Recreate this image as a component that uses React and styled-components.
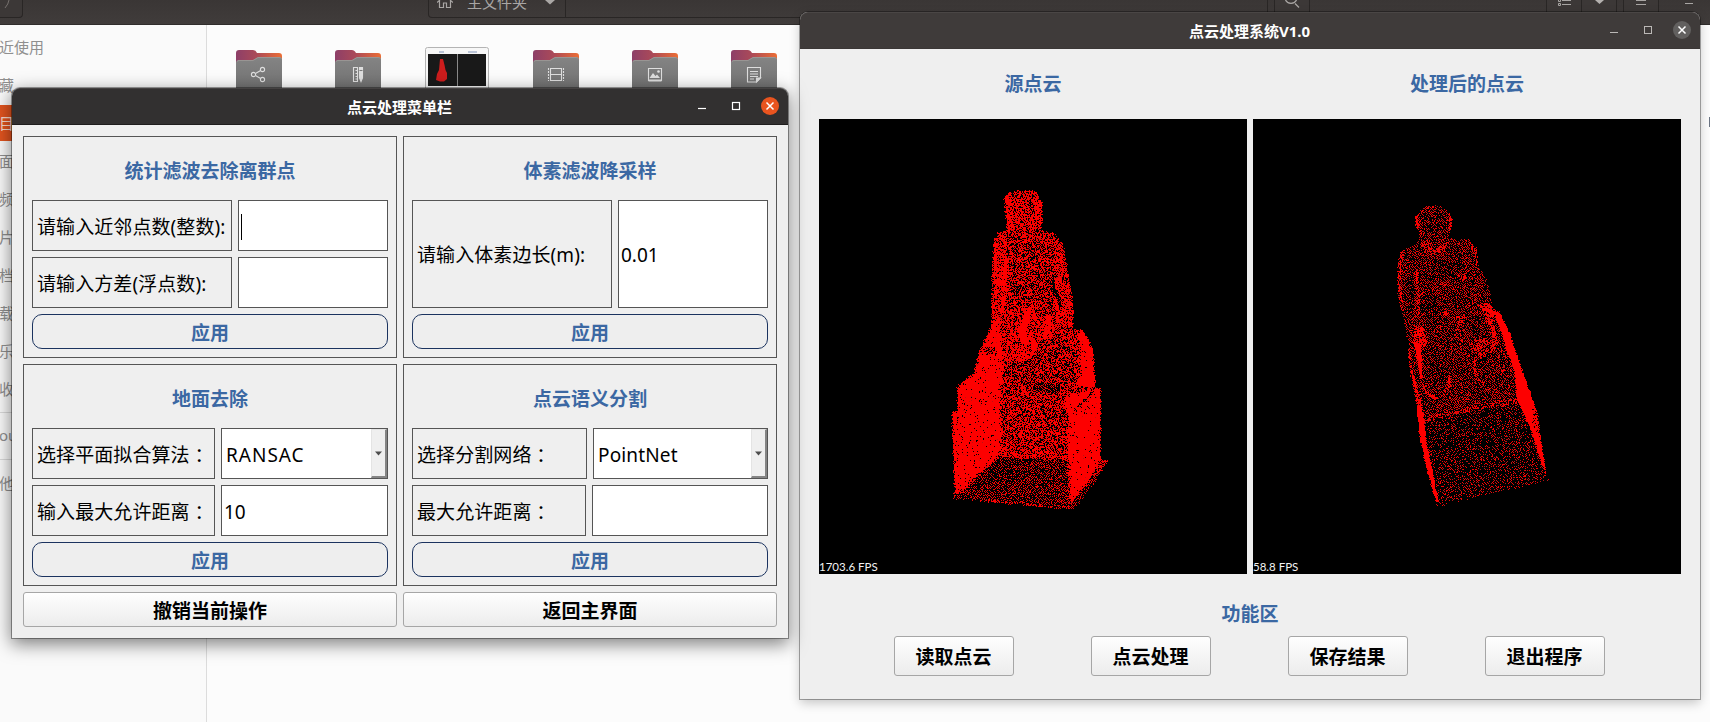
import React from "react";
import styled, { createGlobalStyle } from "styled-components";

const Global = createGlobalStyle`
  html, body { margin: 0; padding: 0; overflow: hidden; }
  *, *::before, *::after { box-sizing: border-box; }
  body, button, input { font-family: "Noto Sans", "Noto Sans CJK SC", sans-serif; }
`;

const Desktop = styled.div`
  position: relative;
  width: 1710px;
  height: 722px;
  overflow: hidden;
  background: #fcfcfc;
`;

/* ---------- file manager in the background ---------- */

const FileManager = styled.div`
  display: flex;
  flex-direction: column;
  height: 100%;
`;

const HeaderBar = styled.header`
  display: flex;
  flex: none;
  align-items: flex-start;
  height: 25px;
  background: linear-gradient(#3a3635, #403c3b);
  border-bottom: 1px solid #302d2c;
  color: #a9a6a4;
`;

const HeaderButton = styled.div`
  display: flex;
  justify-content: center;
  flex: none;
  width: ${(p) => p.$w}px;
  height: 18px;
  margin-left: ${(p) => p.$ml || 0}px;
  border: solid #292625;
  border-width: 0 1px 1px ${(p) => (p.$joined ? 0 : 1)}px;
  border-radius: ${(p) => (p.$joined ? "0 0 4px 0" : "0 0 4px 4px")};
  background: #3c3837;
  svg { display: block; }
`;

const PathBar = styled.div`
  display: flex;
  flex: none;
  width: 840px;
  height: 18px;
  margin-left: 405px;
  border: solid #292625;
  border-width: 0 1px 1px;
  border-radius: 0 0 4px 4px;
`;

const PathItem = styled.div`
  display: flex;
  width: 137px;
  height: 17px;
  padding-left: 8px;
  border-right: 1px solid #292625;
  font-size: 15px;
  line-height: 20px;
  overflow: hidden;
  svg { flex: none; display: block; }
`;

const PathName = styled.span`
  margin: -8px 0 0 14px;
  width: 78px;
`;

const FileBody = styled.div`
  display: flex;
  flex: 1;
`;

const Sidebar = styled.nav`
  width: 207px;
  padding-top: 4px;
  background: #fafafa;
  border-right: 1px solid #dcdcdc;
`;

const Place = styled.div`
  height: 38px;
  margin-left: -1px;
  display: flex;
  align-items: center;
  font-size: 15px;
  line-height: 20px;
  color: ${(p) => (p.$on ? "#f8dccf" : "#8f8f8f")};
  padding-bottom: 2px;
  background: ${(p) => (p.$on ? "linear-gradient(#e2541f, #e2541f) 0 0 / 100% 36px no-repeat" : "none")};
`;

const PlaceRule = styled.div`
  height: 1px;
  margin: ${(p) => p.$m};
  background: #dadada;
`;

const FileGrid = styled.div`
  display: flex;
  gap: 35px;
  padding: 22px 0 0 20px;
`;

const FileItem = styled.div`
  width: 64px;
  height: 56px;
  display: flex;
  justify-content: center;
  svg { display: block; flex: none; }
`;

const EdgeMark = styled.div`
  position: absolute;
  right: 0;
  top: 117px;
  width: 1px;
  height: 10px;
  background: #6c7584;
`;

/* ---------- application windows ---------- */

const Window = styled.section`
  position: absolute;
  left: ${(p) => p.$x}px;
  top: ${(p) => p.$y}px;
  width: ${(p) => p.$w}px;
  height: ${(p) => p.$h}px;
  display: flex;
  flex-direction: column;
  border-radius: 8px 8px 0 0;
  background: #efefef;
  box-shadow: ${(p) =>
    p.$active
      ? "0 0 0 1px rgba(0,0,0,.36), 0 5px 18px 1px rgba(0,0,0,.5)"
      : "0 0 0 1px rgba(0,0,0,.32), 0 4px 11px rgba(0,0,0,.22)"};
`;

const TitleBar = styled.header`
  display: grid;
  grid-template-columns: 1fr auto 1fr;
  flex: none;
  align-items: center;
  height: 37px;
  padding-right: 9px;
  padding-left: 9px;
  border-radius: 8px 8px 0 0;
  color: #fff;
  background: ${(p) => (p.$active ? "#323030" : "#3f3b3a")};
  border-top: 1px solid ${(p) => (p.$active ? "#444141" : "#4a4645")};
  border-bottom: 1px solid ${(p) => (p.$active ? "#1f1d1d" : "#3b3736")};
`;

const WindowTitle = styled.h1`
  grid-column: 2;
  margin: 0 1px 0 0;
  font-size: 15px;
  line-height: 22px;
  font-weight: 700;
`;

const Controls = styled.div`
  justify-self: end;
  display: flex;
  margin-top: -1px;
  svg { display: block; }
`;

const SectionTitle = styled.h2`
  display: flex;
  align-items: center;
  justify-content: center;
  flex: none;
  height: ${(p) => p.$h}px;
  margin: 0;
  padding-top: ${(p) => p.$pt || 0}px;
  font-size: 19px;
  font-weight: 700;
  line-height: 26px;
  color: #3b68a3;
`;

const PushButton = styled.button`
  height: ${(p) => p.$h}px;
  width: ${(p) => (p.$w ? p.$w + "px" : "auto")};
  padding: 2px 0 0;
  border: 1px solid #a6a6a6;
  border-radius: 3px;
  background: linear-gradient(#fefefe, #ececec);
  font-size: 19px;
  line-height: 26px;
  font-weight: 700;
  color: #000;
`;

/* ---------- menu window ---------- */

const MenuBody = styled.div`
  display: grid;
  grid-template-columns: 374px 374px;
  grid-template-rows: 222px 222px 35px;
  gap: 6px;
  padding: 11px;
`;

const Panel = styled.div`
  display: flex;
  flex-direction: column;
  gap: 6px;
  padding: 8px;
  border: 1px solid #555;
`;

const FieldRow = styled.div`
  display: flex;
  gap: 6px;
  height: ${(p) => (p.$tall ? 108 : 51)}px;
`;

const FieldLabel = styled.label`
  display: flex;
  align-items: center;
  flex: none;
  width: ${(p) => p.$w}px;
  padding: 2px 0 0 4px;
  border: 1px solid #555;
  font-size: 19px;
  line-height: 26px;
  letter-spacing: 0.08px;
  white-space: nowrap;
  color: #000;
`;

const Colon = styled.span`
  padding-top: 1px;
  font-family: "Noto Sans CJK TC", sans-serif;
`;

const TextBox = styled.div`
  display: flex;
  align-items: center;
  flex: 1;
  padding: 2px 2px 0;
  border: 1px solid #555;
  background: #fff;
  font-size: 19px;
  line-height: 26px;
  color: #000;
`;

const Caret = styled.span`
  width: 1px;
  height: 26px;
  background: #000;
`;

const ComboBox = styled(TextBox)`
  justify-content: space-between;
  padding: 0 0 0 4px;
`;

const ComboValue = styled.span`
  padding-top: 2px;
  letter-spacing: ${(p) => p.$track}px;
`;

const ComboArrow = styled.span`
  display: flex;
  align-items: center;
  justify-content: center;
  align-self: stretch;
  width: 16px;
  background: #efefef;
  border: solid;
  border-width: 1px 2px 2px 1px;
  border-color: #e4e4e4 #858585 #858585 #e4e4e4;
`;

const ApplyButton = styled.button`
  height: 35px;
  padding: 2px 0 0;
  border: 1px solid #1b335f;
  border-radius: 10px;
  background: #eeeeee;
  font-size: 19px;
  line-height: 26px;
  font-weight: 700;
  color: #3b68a3;
`;

/* ---------- viewer window ---------- */

const Viewer = styled.div`
  display: flex;
  flex-direction: column;
  padding: 0 19px;
`;

const Views = styled.div`
  display: grid;
  grid-template-columns: 428px 428px;
  gap: 0 6px;
`;

const View = styled.div`
  display: flex;
  flex-direction: column;
  height: 455px;
  background: #000;
  color: #f2f2f2;
  svg { display: block; flex: none; }
`;

const Fps = styled.div`
  margin-top: -16px;
  font-family: Lato, sans-serif;
  font-size: 11.5px;
  line-height: 17px;
`;

const ButtonRow = styled.div`
  display: flex;
  justify-content: center;
  gap: 77px;
  padding-right: 2px;
`;

/* ---------- point clouds ---------- */

/* Each region is [density, polygon]; a later region overrides an earlier one. */
const SOURCE = {
  dx: 111, dy: 51, w: 200, h: 360, seed: 7, shade: 0.2, jitter: 7,
  regions: [
    [0.62, "228,72 262,62 318,64 338,100 336,180 374,192 400,222 412,300 430,380 430,474 460,482 490,540 496,652 512,656 512,868 534,872 500,920 425,1018 300,1008 150,992 66,986 74,960 66,730 82,722 84,648 134,608 142,560 186,460 184,350 194,300 192,210 206,188 230,178 222,90"],
    [0.85, "222,84 246,66 254,180 232,180"],
    [0.85, "310,70 338,100 334,170 318,160"],
    [0.68, "246,120 316,100 322,174 250,178"],
    [0.78, "192,205 222,185 232,250 224,430 186,460 186,330"],
    [0.56, "232,190 380,210 400,420 350,430 238,440"],
    [0.97, "222,260 234,270 228,370 220,430 210,430"],
    [0.75, "374,210 400,226 412,300 428,380 428,470 398,470 396,390 374,340"],
    [0.08, "364,328 374,340 394,404 386,404 372,370"],
    [0.97, "368,384 382,388 400,470 388,478"],
    [0.7, "240,420 270,410 400,440 396,520 300,580 220,590"],
    [0.9, "284,470 300,480 330,540 300,556 280,520"],
    [1, "314,400 300,440 290,480 292,520 276,520 262,490 274,450 290,416"],
    [0.97, "350,430 366,440 356,500 346,560 336,540 344,480"],
    [0.95, "200,440 210,470 220,580 214,680 84,720 84,648 134,608 160,520 186,462"],
    [0.65, "160,530 196,530 200,552 168,556"],
    [0.8, "228,530 270,540 300,560 290,580 222,600"],
    [0.52, "340,510 420,484 440,560 430,630 380,680 290,650 222,620 224,580 300,570"],
    [0.7, "400,480 460,482 488,540 494,640 440,640 442,550 400,520"],
    [0.97, "446,490 462,484 490,540 496,650 440,650 456,590"],
    [0.6, "212,640 400,660 414,730 412,868 212,856"],
    [0.36, "300,650 380,640 392,664 330,668"],
    [0.96, "82,650 210,600 210,856 156,900 80,980 74,950 66,730 82,722"],
    [0.97, "410,680 470,660 512,656 512,868 480,926 425,1000 414,860 416,730 400,700"],
    [0.5, "430,726 486,662 492,668 438,726"],
    [0.72, "206,838 414,850 412,868 206,858"],
    [0.34, "206,862 412,872 414,1010 300,1004 150,986 90,976"],
    [0.2, "190,885 250,880 250,940 160,930"],
    [0.3, "66,980 96,968 150,990 70,990"],
    [0.32, "425,1000 490,926 534,872 500,930 430,1020"],
  ],
};

const RESULT = {
  dx: 117, dy: 61, w: 200, h: 350, seed: 23, shade: 0.5, jitter: 5,
  regions: [
    [0.37, "188,74 218,80 246,110 244,150 236,176 296,180 318,200 324,250 356,320 366,380 392,400 410,450 440,600 452,664 160,726 134,640 116,506 104,420 84,350 82,260 92,214 148,186 150,160 138,140 142,106 160,84"],
    [0.75, "136,110 148,98 150,160 138,140"],
    [0.75, "236,100 248,118 244,150 236,152"],
    [0.65, "150,184 180,182 190,210 226,190 240,176 220,220 170,222"],
    [0.24, "160,110 226,100 230,150 160,160"],
    [0.66, "82,260 92,214 106,210 94,260 98,400 88,370"],
    [0.66, "296,182 318,200 326,262 318,262 306,210"],
    [0.7, "134,270 144,280 152,360 148,420 142,400 138,330"],
    [0.24, "106,290 132,290 136,350 110,380"],
    [0.26, "180,240 280,220 276,280 190,300"],
    [0.8, "286,250 292,250 286,300 276,310"],
    [0.85, "218,394 232,394 234,406 220,406"],
    [0.24, "150,350 210,350 200,400 156,400"],
    [0.55, "250,410 284,400 290,420 270,440 280,490 254,470"],
    [0.26, "290,420 330,400 340,470 300,480"],
    [0.8, "326,374 352,366 376,396 364,440 350,430 340,400"],
    [0.85, "358,420 372,430 384,490 374,500"],
    [0.62, "296,490 340,470 386,490 366,524 336,534 306,520"],
    [0.8, "134,440 158,436 172,490 156,510 156,590 144,560 130,490"],
    [1, "128,486 152,490 158,596 150,596 142,520"],
    [0.28, "170,500 240,500 236,600 190,620 166,590"],
    [0.8, "150,600 160,610 176,640 206,652 196,660 168,646"],
    [0.75, "236,580 244,590 238,630 214,654 230,620"],
    [0.8, "308,530 316,530 322,590 340,610 340,620 314,590"],
    [0.37, "350,520 420,500 440,600 440,650 350,650"],
    [0.19, "162,728 452,666 500,780 530,896 320,944 206,972"],
    [0.2, "192,968 206,958 330,934 540,892 532,904 320,950 200,982"],
    [0.55, "158,714 240,694 360,668 448,656 448,670 360,684 240,708 160,728"],
    [1, "368,390 392,402 420,460 456,570 486,650 504,710 516,800 532,896 514,850 482,750 440,654 434,580 410,510 398,470"],
    [0.75, "486,680 504,710 512,780 486,730"],
    [1, "138,660 156,680 172,800 188,870 206,966 198,966 166,850 148,760"],
    [0.9, "120,560 130,570 156,680 144,690"],
    [0.85, "114,504 120,510 128,580 122,590"],
  ],
};

function contains(poly, x, y) {
  let inside = false;
  for (let i = 0, j = poly.length - 1; i < poly.length; j = i++) {
    const [xi, yi] = poly[i];
    const [xj, yj] = poly[j];
    if (yi > y !== yj > y && x < ((xj - xi) * (y - yi)) / (yj - yi) + xi) inside = !inside;
  }
  return inside;
}

function scatter({ dx, dy, w, h, seed, shade, jitter, regions }) {
  const polys = regions.map(([d, pts]) => [d, pts.split(" ").map((p) => p.split(",").map(Number))]);
  let s = seed;
  const rand = () => {
    s = (s + 0x6d2b79f5) | 0;
    let t = Math.imul(s ^ (s >>> 15), 1 | s);
    t = (t + Math.imul(t ^ (t >>> 7), 61 | t)) ^ t;
    return ((t ^ (t >>> 14)) >>> 0) / 4294967296;
  };
  const filled = new Uint8Array(w * h);
  let bright = "";
  let dim = "";
  for (let y = 0; y < h; y++) {
    for (let x = 0; x < w; x++) {
      const px = x * 3 + 1.5 + (rand() - 0.5) * jitter;
      const py = y * 3 + 1.5 + (rand() - 0.5) * jitter;
      const pick = rand();
      const tone = rand();
      let density = 0;
      for (const [d, poly] of polys) if (contains(poly, px, py)) density = d;
      /* sparse areas keep their points apart */
      const near = filled[y * w + x - 1] || filled[(y - 1) * w + x];
      const chance = density < 0.45 ? density * (near ? 0.45 : 1.5) : density;
      if (pick < chance) {
        filled[y * w + x] = 1;
        const cell = `M${x + dx} ${y + dy}h1v1h-1z`;
        if (tone < shade * (1 - density)) dim += cell;
        else bright += cell;
      }
    }
  }
  return { bright, dim };
}

const clouds = { source: scatter(SOURCE), result: scatter(RESULT) };

function PointCloud({ cloud }) {
  return (
    <svg width="428" height="455" shapeRendering="crispEdges">
      <path d={cloud.bright} fill="#fd0000" />
      <path d={cloud.dim} fill="#b81414" />
    </svg>
  );
}

/* ---------- drawings ---------- */

const emblems = {
  share: (
    <g>
      <circle cx="17.5" cy="24.5" r="2.1" />
      <circle cx="26.5" cy="19.5" r="2.1" />
      <circle cx="26.5" cy="29.5" r="2.1" />
      <path d="M19.5 23.5 24.6 20.6M19.5 25.5l5.1 2.9" />
    </g>
  ),
  tools: (
    <g>
      <path d="M18.5 17.5h4v14h-4zM20.5 20.5h2M20.5 23.5h2M20.5 26.5h2M20.5 29h2" />
      <path d="M24.5 17.5h3v10.5l-1.5 3.5-1.5-3.5z" fill="#dedede" />
      <path d="M24.5 20.5h3" stroke="#7b7b7b" />
    </g>
  ),
  film: (
    <g>
      <path d="M17.5 18v13M28.5 18v13M17.5 18.5h11M17.5 24.5h11M17.5 30.5h11" />
      <path d="M15.5 18v13M30.5 18v13" strokeDasharray="2 1" />
    </g>
  ),
  image: (
    <g>
      <path d="M16.5 18.5h13v12h-13z" />
      <path d="M17.5 28l3.5-5 2.5 3 1.5-1.5 3 3.5z" fill="#dedede" stroke="none" />
      <circle cx="26.5" cy="21.5" r="1.3" fill="#dedede" stroke="none" />
      <path d="M16.5 30.5h13" strokeWidth="2" />
    </g>
  ),
  doc: (
    <g>
      <path d="M16.5 17.5h13v10l-4 4.5h-9zM19 21.5h8M19 24h8M19 26.5h8M19 29h4" />
      <path d="M29.5 28h-4v4z" fill="#dedede" />
    </g>
  ),
};

function Folder({ kind }) {
  return (
    <svg width="46" height="56" viewBox="0 0 46 56">
      <defs>
        <linearGradient id={`tab-${kind}`} x1="0" x2="1">
          <stop offset="0" stopColor="#8d3f68" />
          <stop offset=".45" stopColor="#ab4a58" />
          <stop offset="1" stopColor="#ec6e35" />
        </linearGradient>
        <linearGradient id={`front-${kind}`} x1="0" y1="0" x2="0" y2="1">
          <stop offset="0" stopColor="#848484" />
          <stop offset="1" stopColor="#6a6a6a" />
        </linearGradient>
      </defs>
      <path d="M0 6q0-3 3-3h14q2 0 3 1.500l1 1.500h22q3 0 3 3v20H0z" fill={`url(#tab-${kind})`} />
      <path d="M0 16q0-3 3-3h14l5-3h21q3 0 3 3v43H0z" fill={`url(#front-${kind})`} />
      <path d="M1 14.500q1-1 2-1h14l5-3h21q1.500 0 2.500 1" fill="none" stroke="#a09a98" strokeWidth=".8" />
      <g transform="translate(0 3)" fill="none" stroke="#dedede" strokeWidth="1.1">{emblems[kind]}</g>
    </svg>
  );
}

function Thumbnail() {
  return (
    <svg width="64" height="56" viewBox="0 0 64 56">
      <rect x=".5" y=".5" width="63" height="60" rx="2" fill="#f7f7f7" stroke="#b4b4b4" />
      <path d="M14 5h5M43 5h9" stroke="#8093b8" strokeWidth="1.200" />
      <rect x="3" y="7" width="58" height="32" fill="#191919" />
      <path d="M32.500 7v32" stroke="#8a8a8a" />
      <path d="M15 12h3l1.500 6 1 5 1.500 3v6l-3 2.500h-4l-4-1.500 1-6 2-4z" fill="#cd1d1d" />
    </svg>
  );
}

function WindowControls({ active }) {
  const ink = active ? "#fff" : "#bbb8b6";
  return (
    <Controls>
      <svg width="86" height="18" fill="none" stroke={ink}>
        <path d="M5 11.500h8" strokeWidth={active ? 1.2 : 1} />
        <rect x="39.500" y="5.500" width="7" height="7" strokeWidth={active ? 1.2 : 1} />
        <circle cx="77" cy="9" r="9" fill={active ? "#e9541f" : "#62605f"} stroke="none" />
        <path d="M73.500 5.500l7 7M80.500 5.500l-7 7" stroke="#fff" strokeWidth="1.500" />
      </svg>
    </Controls>
  );
}

function Combo({ children, track }) {
  return (
    <ComboBox>
      <ComboValue $track={track}>{children}</ComboValue>
      <ComboArrow>
        <svg width="7" height="5"><path d="M0 0.500h7L3.500 4.500z" fill="#4c4c4c" /></svg>
      </ComboArrow>
    </ComboBox>
  );
}

function Files() {
  return (
    <FileManager>
      <HeaderBar>
        <HeaderButton $w={23} $joined>
          <svg width="18" height="9" fill="none" stroke="#77726f"><path d="M7 0q-.5 4-4 8" /></svg>
        </HeaderButton>
        <PathBar>
          <PathItem>
            <svg width="16" height="9" fill="none" stroke="currentColor" strokeWidth="1.200">
              <path d="M0 2.500 3 0M16 2.500 13 0M2.500 1v6.500h4V3h3v4.500h4V1" />
            </svg>
            <PathName>主文件夹</PathName>
            <svg width="10" height="5"><path d="M0 0h10L5 4.500z" fill="#aaa7a5" /></svg>
          </PathItem>
        </PathBar>
        <HeaderButton $w={36} $ml={6}>
          <svg width="16" height="9" fill="none" stroke="currentColor" strokeWidth="1.300">
            <path d="M1.500 0a6 5.500 0 0 0 11 0M11 3.500l4 4" />
          </svg>
        </HeaderButton>
        <HeaderButton $w={36} $ml={236}>
          <svg width="13" height="7" stroke="currentColor" fill="none">
            <path d="M4 .5h9M4 4.500h9M.5 0v1.500h2V0M.5 3.500h2v2h-2z" />
          </svg>
        </HeaderButton>
        <HeaderButton $w={35} $joined>
          <svg width="9" height="5"><path d="M0 0h9L4.500 4z" fill="#b4b1af" /></svg>
        </HeaderButton>
        <HeaderButton $w={36} $ml={6}>
          <svg width="10" height="7" stroke="currentColor"><path d="M0 .5h10M0 4.500h10" /></svg>
        </HeaderButton>
        <svg width="50" height="8" stroke="currentColor"><path d="M26 3.500h8" /></svg>
      </HeaderBar>
      <FileBody>
        <Sidebar>
          <Place>近使用</Place>
          <Place>藏</Place>
          <Place $on>目</Place>
          <Place>面</Place>
          <Place>频</Place>
          <Place>片</Place>
          <Place>档</Place>
          <Place>载</Place>
          <Place>乐</Place>
          <Place>收</Place>
          <PlaceRule $m="3px 0 4px" />
          <Place>ou</Place>
          <PlaceRule $m="4px 0 5px" />
          <Place>他</Place>
        </Sidebar>
        <FileGrid>
          <FileItem><Folder kind="share" /></FileItem>
          <FileItem><Folder kind="tools" /></FileItem>
          <FileItem><Thumbnail /></FileItem>
          <FileItem><Folder kind="film" /></FileItem>
          <FileItem><Folder kind="image" /></FileItem>
          <FileItem><Folder kind="doc" /></FileItem>
        </FileGrid>
      </FileBody>
    </FileManager>
  );
}

function ViewerWindow() {
  return (
    <Window $x={800} $y={12} $w={900} $h={687}>
      <TitleBar>
        <WindowTitle>点云处理系统V1.0</WindowTitle>
        <WindowControls />
      </TitleBar>
      <Viewer>
        <Views>
          <SectionTitle $h={70}>源点云</SectionTitle>
          <SectionTitle $h={70}>处理后的点云</SectionTitle>
          <View>
            <PointCloud cloud={clouds.source} />
            <Fps>1703.6 FPS</Fps>
          </View>
          <View>
            <PointCloud cloud={clouds.result} />
            <Fps>58.8 FPS</Fps>
          </View>
        </Views>
        <SectionTitle $h={62} $pt={18}>功能区</SectionTitle>
        <ButtonRow>
          {["读取点云", "点云处理", "保存结果", "退出程序"].map((t) => (
            <PushButton key={t} $w={120} $h={40}>{t}</PushButton>
          ))}
        </ButtonRow>
      </Viewer>
    </Window>
  );
}

function MenuWindow() {
  return (
    <Window $x={12} $y={88} $w={776} $h={550} $active>
      <TitleBar $active>
        <WindowTitle>点云处理菜单栏</WindowTitle>
        <WindowControls active />
      </TitleBar>
      <MenuBody>
        <Panel>
          <SectionTitle $h={49} $pt={2}>统计滤波去除离群点</SectionTitle>
          <FieldRow>
            <FieldLabel $w={200}>请输入近邻点数(整数):</FieldLabel>
            <TextBox><Caret /></TextBox>
          </FieldRow>
          <FieldRow>
            <FieldLabel $w={200}>请输入方差(浮点数):</FieldLabel>
            <TextBox />
          </FieldRow>
          <ApplyButton>应用</ApplyButton>
        </Panel>
        <Panel>
          <SectionTitle $h={49} $pt={2}>体素滤波降采样</SectionTitle>
          <FieldRow $tall>
            <FieldLabel $w={200}>请输入体素边长(m):</FieldLabel>
            <TextBox>0.01</TextBox>
          </FieldRow>
          <ApplyButton>应用</ApplyButton>
        </Panel>
        <Panel>
          <SectionTitle $h={49} $pt={2}>地面去除</SectionTitle>
          <FieldRow>
            <FieldLabel $w={183}>选择平面拟合算法<Colon lang="zh-TW">：</Colon></FieldLabel>
            <Combo track={1}>RANSAC</Combo>
          </FieldRow>
          <FieldRow>
            <FieldLabel $w={183}>输入最大允许距离<Colon lang="zh-TW">：</Colon></FieldLabel>
            <TextBox>10</TextBox>
          </FieldRow>
          <ApplyButton>应用</ApplyButton>
        </Panel>
        <Panel>
          <SectionTitle $h={49} $pt={2}>点云语义分割</SectionTitle>
          <FieldRow>
            <FieldLabel $w={175}>选择分割网络<Colon lang="zh-TW">：</Colon></FieldLabel>
            <Combo track={0.15}>PointNet</Combo>
          </FieldRow>
          <FieldRow>
            <FieldLabel $w={174}>最大允许距离<Colon lang="zh-TW">：</Colon></FieldLabel>
            <TextBox />
          </FieldRow>
          <ApplyButton>应用</ApplyButton>
        </Panel>
        <PushButton $h={35}>撤销当前操作</PushButton>
        <PushButton $h={35}>返回主界面</PushButton>
      </MenuBody>
    </Window>
  );
}

export default function App() {
  return (
    <Desktop lang="zh-CN">
      <Global />
      <Files />
      <EdgeMark />
      <ViewerWindow />
      <MenuWindow />
    </Desktop>
  );
}
